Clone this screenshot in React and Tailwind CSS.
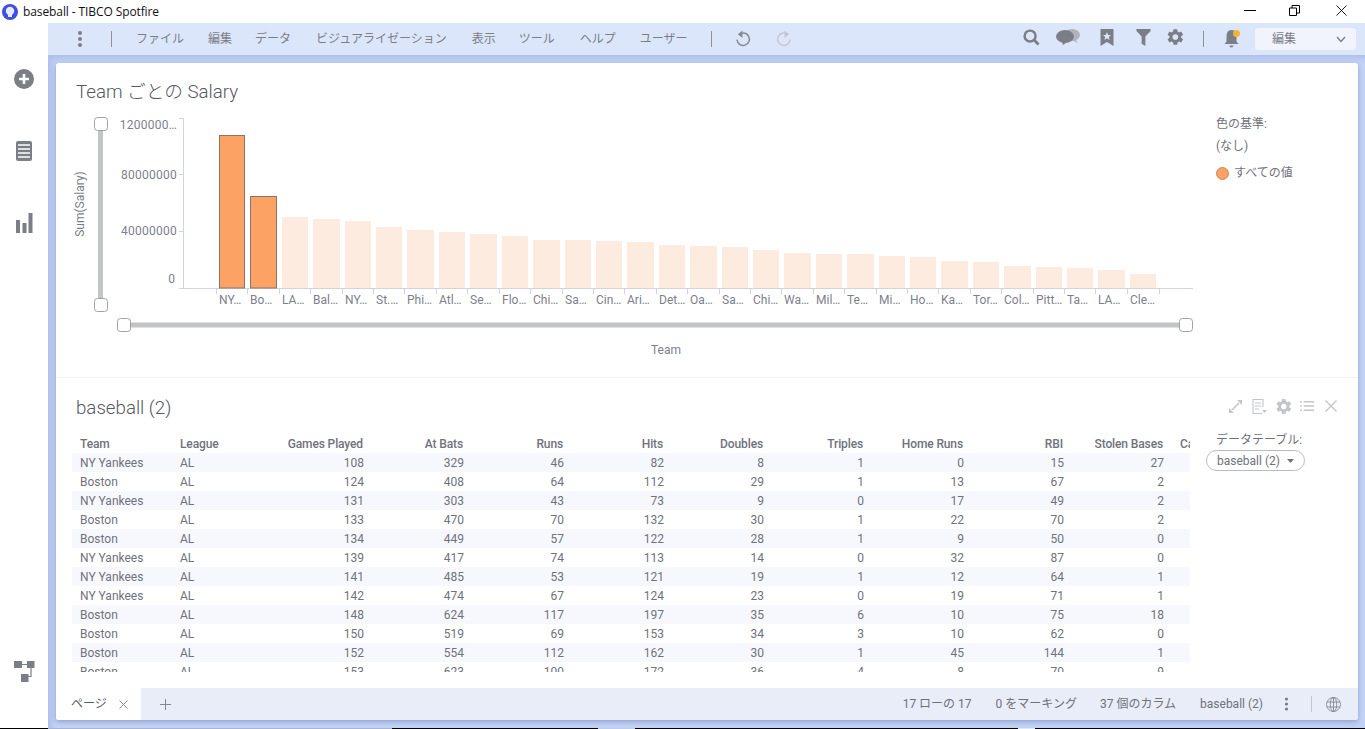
import React from "react";

const FONT = "font-['Roboto','Noto_Sans_CJK_JP',sans-serif]";
const G = "#7b7e87";

const Dots = ({ c = G }) => (
  <svg width="6" height="18" viewBox="0 0 6 18"><circle cx="3" cy="3" r="2" fill={c} /><circle cx="3" cy="9" r="2" fill={c} /><circle cx="3" cy="15" r="2" fill={c} /></svg>
);
const Sep = ({ cls = "" }) => <div className={`w-px h-[16px] bg-[#8d9099] ${cls}`} />;

const Gear = ({ size = 18, c = G }) => (
  <svg width={size} height={size} viewBox="0 0 24 24">
    <path fill={c} d="M19.4 13a7.6 7.6 0 0 0 0-2l2.3-1.8-2.2-3.8-2.7 1.1a7.5 7.5 0 0 0-1.8-1L14.6 2.6h-4.4l-.4 2.9a7.5 7.5 0 0 0-1.8 1L5.3 5.4 3.1 9.2 5.4 11a7.6 7.6 0 0 0 0 2l-2.3 1.8 2.2 3.8 2.7-1.1a7.5 7.5 0 0 0 1.8 1l.4 2.9h4.4l.4-2.9a7.5 7.5 0 0 0 1.8-1l2.7 1.1 2.2-3.8zM12.4 15.4a3.4 3.4 0 1 1 0-6.8 3.4 3.4 0 0 1 0 6.8z" />
  </svg>
);

const Undo = ({ c, flip }) => (
  <svg width="16" height="18" viewBox="0 0 16 18" style={flip ? { transform: "scaleX(-1)" } : undefined}>
    <path d="M4 4.6 A6.2 6.2 0 1 1 2 9.6" fill="none" stroke={c} strokeWidth="1.5" />
    <path d="M7.5 0.5 L7.5 8 L2.8 4.2 Z" fill={c} />
  </svg>
);

const menus = [
  ["ファイル", "ml-[24px]"], ["編集", "ml-[24px]"], ["データ", "ml-[23px]"], ["ビジュアライゼーション", "ml-[25px]"],
  ["表示", "ml-[25px]"], ["ツール", "ml-[23px]"], ["ヘルプ", "ml-[25px]"], ["ユーザー", "ml-[24px]"],
];

function Toolbar() {
  return (
    <div className="h-[32px] shrink-0 bg-[#dce6fb] flex items-center text-[12px] text-[#7b7e87]">
      <div className="ml-[29px]"><Dots /></div>
      <Sep cls="ml-[28px]" />
      {menus.map(([m, c]) => <span key={m} className={`${c} leading-[16px]`}>{m}</span>)}
      <Sep cls="ml-[23px]" />
      <div className="ml-[23px] flex"><Undo c="#868a93" /></div>
      <div className="ml-[25px] flex"><Undo c="#c3c8d2" flip /></div>
      <div className="ml-auto flex items-center">
        <div className="flex items-center mb-[4px]">
          <svg width="17" height="17" viewBox="0 0 18 18"><circle cx="7.5" cy="7.5" r="5.8" fill="none" stroke={G} strokeWidth="2.6" /><path d="M11.5 11.5 L16.5 16.5" stroke={G} strokeWidth="3" /></svg>
          <svg className="ml-[16px]" width="24" height="16" viewBox="0 0 24 16"><ellipse cx="16" cy="6" rx="8" ry="6" fill="#b0b3ba" /><path d="M20 11 L22 14 L16 11 Z" fill="#b0b3ba" /><ellipse cx="9" cy="7.5" rx="9" ry="6.5" fill={G} /><path d="M6 13 L7 16 L11 13 Z" fill={G} /></svg>
          <svg className="ml-[20px]" width="14" height="17" viewBox="0 0 14 17"><path d="M0.5 0 H13.5 V17 L7 13 L0.5 17 Z" fill={G} /><path d="M7 3.2 L8.2 6 L11 6.2 L8.8 8 L9.6 11 L7 9.3 L4.4 11 L5.2 8 L3 6.2 L5.8 6 Z" fill="#dce6fb" /></svg>
          <svg className="ml-[22px]" width="15" height="17" viewBox="0 0 15 18"><path d="M0 0 H15 V2 L9.5 8 V18 L5.5 15.5 V8 L0 2 Z" fill={G} /></svg>
          <div className="ml-[14px] flex"><Gear size={20} /></div>
        </div>
        <Sep cls="ml-[18px]" />
        <div className="relative ml-[20px] w-[18px] h-[20px]">
          <svg width="15" height="20" viewBox="0 0 15 20"><path d="M7.5 1 C3.5 1 2.5 4.5 2.5 8 V12.5 L0.5 15 H14.5 L12.5 12.5 V8 C12.5 4.5 11.5 1 7.5 1 Z" fill={G} /><path d="M5.5 16.5 H9.5 C9.5 19 5.5 19 5.5 16.5 Z" fill={G} /></svg>
          <div className="absolute left-[9px] top-[1px] w-[7px] h-[7px] rounded-full bg-[#f8b133]" />
        </div>
        <div className="ml-[13px] mr-[9px] w-[101px] h-[22px] rounded-[3px] bg-[#f1f4fd] flex items-center pl-[17px] pr-[10px] justify-between">
          <span className="text-[12px] text-[#7b7e87]">編集</span>
          <svg width="10" height="7" viewBox="0 0 10 7"><path d="M1 1 L5 5.5 L9 1" fill="none" stroke="#7b7e87" strokeWidth="1.3" /></svg>
        </div>
      </div>
    </div>
  );
}

const tops = [135,196,217,219,221,227,230,232,234,236,240,240,241,242,245,246,247,250,253,254,254,256,257,261,262,266,267,268,270,274];
const labels = ["NY…","Bo…","LA…","Bal…","NY…","St.…","Phi…","Atl…","Se…","Flo…","Chi…","Sa…","Cin…","Ari…","Det…","Oa…","Sa…","Chi…","Wa…","Mil…","Te…","Mi…","Ho…","Ka…","Tor…","Col…","Pitt…","Ta…","LA…","Cle…"];

function Handle({ x, y }) {
  return <rect x={x - 6.5} y={y - 6.5} width="13" height="13" rx="3" fill="#fff" stroke="#a0a2a9" strokeWidth="1" />;
}

function Chart() {
  const tc = "#7d7f8c";
  const ts = { fontFamily: "Roboto, 'Noto Sans CJK JP', sans-serif", fontSize: 12, fill: tc };
  const ns = { ...ts, letterSpacing: 0.25 };
  return (
    <svg width="1140" height="255" viewBox="60 105 1140 255" className="ml-[4px] block">
      <line x1="100.5" y1="124" x2="100.5" y2="305" stroke="#c3c4c9" strokeWidth="5" />
      <Handle x={101} y={124} />
      <Handle x={101} y={305} />
      <line x1="124" y1="325" x2="1186" y2="325" stroke="#c3c4c9" strokeWidth="5" />
      <Handle x={124} y={325} />
      <Handle x={1186} y={325} />
      <path d="M179 118.5 H183.5 V288.5 M179 174.5 H183 M179 231.5 H183 M179 288.5 H1193" fill="none" stroke="#d2d3de" />
      {tops.map((t, i) => {
        const x = Math.round(219 + i * 31.41);
        const nx = Math.round(219 + (i + 1) * 31.41);
        const w = nx - x - 5;
        const hi = i < 2;
        return (
          <g key={i}>
            <line x1={x - 2.5} x2={x - 2.5} y1="288" y2="294" stroke="#d2d3de" />
            <rect x={hi ? x + 0.5 : x} y={hi ? t + 0.5 : t} width={hi ? w - 1 : w} height={hi ? 288 - t - 0.5 : 288 - t} fill={hi ? "#fba264" : "#feebe0"} stroke={hi ? "#8a7466" : "none"} />
            <text x={x} y="304" style={ts}>{labels[i]}</text>
          </g>
        );
      })}
      <line x1="1159.5" x2="1159.5" y1="288" y2="294" stroke="#d2d3de" />
      <text x="177" y="129" textAnchor="end" style={ns}>1200000…</text>
      <text x="177" y="179" textAnchor="end" style={ns}>80000000</text>
      <text x="177" y="235" textAnchor="end" style={ns}>40000000</text>
      <text x="175" y="283" textAnchor="end" style={ts}>0</text>
      <text transform="translate(84 204) rotate(-90)" textAnchor="middle" style={ts}>Sum(Salary)</text>
      <text x="666" y="354" textAnchor="middle" style={ts}>Team</text>
    </svg>
  );
}

const cols = ["Team","League","Games Played","At Bats","Runs","Hits","Doubles","Triples","Home Runs","RBI","Stolen Bases","Ca"];
const rows = [
  ["NY Yankees","AL",108,329,46,82,8,1,0,15,27],
  ["Boston","AL",124,408,64,112,29,1,13,67,2],
  ["NY Yankees","AL",131,303,43,73,9,0,17,49,2],
  ["Boston","AL",133,470,70,132,30,1,22,70,2],
  ["Boston","AL",134,449,57,122,28,1,9,50,0],
  ["NY Yankees","AL",139,417,74,113,14,0,32,87,0],
  ["NY Yankees","AL",141,485,53,121,19,1,12,64,1],
  ["NY Yankees","AL",142,474,67,124,23,0,19,71,1],
  ["Boston","AL",148,624,117,197,35,6,10,75,18],
  ["Boston","AL",150,519,69,153,34,3,10,62,0],
  ["Boston","AL",152,554,112,162,30,1,45,144,1],
  ["Boston","AL",153,623,100,172,36,4,8,70,9],
];

function Table() {
  return (
    <div className="ml-[16px] w-[1118px] h-[238px] overflow-hidden text-[12px] text-[#6f727c]">
      <div className="flex h-[19px] items-center">
        {cols.map((c, i) => (
          <div key={c} className={`w-[100px] shrink-0 px-[8px] font-medium tracking-[-0.12px] whitespace-nowrap ${i < 2 || i === 11 ? "text-left" : "text-right pr-[9px]"}`}>{c}</div>
        ))}
      </div>
      {rows.map((r, k) => (
        <div key={k} className={`flex h-[19px] items-center ${k % 2 === 0 ? "bg-[#f7f8fd]" : "bg-white"}`}>
          {r.map((v, i) => (
            <div key={i} className={`w-[100px] shrink-0 px-[8px] whitespace-nowrap ${i < 2 ? "text-left" : "text-right"}`}>{v}</div>
          ))}
        </div>
      ))}
    </div>
  );
}

export default function App() {
  return (
    <div className={`w-[1365px] h-[729px] overflow-hidden bg-white flex flex-col ${FONT}`}>
      <div className="h-[23px] shrink-0 flex items-center bg-white">
        <svg className="ml-[2px]" width="16" height="16" viewBox="0 0 16 16">
          <circle cx="8" cy="8" r="8" fill="#3f4fe0" />
          <circle cx="8" cy="7" r="4.2" fill="#e6ebff" />
          <rect x="6" y="10.5" width="4" height="2.5" fill="#e6ebff" />
        </svg>
        <span className="ml-[5px] text-[12px] text-[#111] font-['Open_Sans',sans-serif] tracking-[-0.1px]">baseball - TIBCO Spotfire</span>
        <div className="ml-auto flex items-center mb-[2px]">
          <div className="w-[12px] h-px bg-black mr-[33px]" />
          <svg className="mr-[36px]" width="11" height="11" viewBox="0 0 11 11"><path d="M0.5 3 H7.5 V10.5 H0.5 Z M3 3 V0.5 H10.5 V8 H7.5" fill="none" stroke="#000" /></svg>
          <svg className="mr-[18px]" width="11" height="11" viewBox="0 0 11 11"><path d="M0.5 0.5 L10.5 10.5 M10.5 0.5 L0.5 10.5" stroke="#000" strokeWidth="0.9" /></svg>
        </div>
      </div>

      <div className="flex flex-1 min-h-0">
        <div className="w-[48px] shrink-0 flex flex-col items-center pt-[46px] pb-[46px]">
          <svg width="20" height="20" viewBox="0 0 20 20"><circle cx="10" cy="10" r="10" fill={G} /><path d="M10 5 V15 M5 10 H15" stroke="#fff" strokeWidth="2.6" /></svg>
          <svg className="mt-[52px]" width="16" height="20" viewBox="0 0 16 20"><rect width="16" height="20" rx="2" fill={G} /><path d="M2 4 H14 M2 8 H14 M2 12 H14 M2 16 H14" stroke="#fff" strokeWidth="1.6" /></svg>
          <svg className="mt-[52px]" width="17" height="20" viewBox="0 0 17 20"><rect y="7" width="4" height="13" fill={G} /><rect x="6.5" y="10" width="4" height="10" fill={G} /><rect x="12.5" width="4" height="20" fill={G} /></svg>
          <svg className="mt-auto" width="21" height="21" viewBox="0 0 21 21"><rect width="8" height="7" fill={G} /><rect x="13" width="7.5" height="7" fill={G} /><rect x="7" y="13" width="7.5" height="8" fill={G} /><path d="M8 3.5 H13 M17 7 V15.5 H14" fill="none" stroke={G} strokeWidth="1.2" /></svg>
        </div>

        <div className="flex-1 min-w-0 flex flex-col bg-[#c3d3f7]">
          <Toolbar />
          <div className="flex-1 min-h-0 pt-[8px] pl-[8px] pr-[7px] shadow-[inset_4px_4px_5px_rgba(80,100,160,0.16)]">
            <div className="h-[657px] bg-white rounded-[3px] overflow-hidden flex flex-col shadow-[0_2px_5px_rgba(70,90,150,0.4)]">
              <div className="h-[315px] shrink-0 border-b border-[#f1f2f6] flex">
                <div className="w-[1144px] shrink-0">
                  <div className="pt-[15px] pl-[20px] h-[42px] text-[18.7px] leading-[28px] font-light text-[#555862]">Team ごとの Salary</div>
                  <Chart />
                </div>
                <div className="ml-[16px] pt-[53px] text-[12px] text-[#6f727c]">
                  <div className="leading-[16px]">色の基準:</div>
                  <div className="leading-[16px] mt-[6px]">(なし)</div>
                  <div className="flex items-center mt-[11px] leading-[16px]">
                    <div className="w-[13px] h-[13px] rounded-full bg-[#fba264] border border-[#c98a5c]" />
                    <span className="ml-[5px]">すべての値</span>
                  </div>
                </div>
              </div>

              <div className="flex-1 min-h-0 flex">
                <div className="w-[1134px] shrink-0">
                  <div className="h-[56px] pt-[16px] pl-[20px] text-[18.7px] leading-[28px] font-light text-[#555862]">baseball (2)</div>
                  <Table />
                </div>
                <div className="flex-1 relative">
                  <div className="flex items-center justify-end h-[16px] mt-[20px] mr-[21px]">
                    <svg width="13" height="13" viewBox="0 0 13 13"><path d="M8 0 H13 V5 Z M0 8 L5 13 H0 Z" fill="#c3c5ca" /><path d="M10 3 L3 10" stroke="#c3c5ca" strokeWidth="1.6" /></svg>
                    <svg className="ml-[10px]" width="15" height="15" viewBox="0 0 15 15"><path d="M10 14.5 H1 V0.5 H11 V8 M3 4 H9 M3 7 H9 M3 10 H7" fill="none" stroke="#c3c5ca" strokeWidth="1.1" /><path d="M10 11 H15 L12.5 14 Z" fill="#c3c5ca" /></svg>
                    <div className="ml-[7px] flex"><Gear size={19} c="#c3c5ca" /></div>
                    <svg className="ml-[7px]" width="14" height="12" viewBox="0 0 15 12"><path d="M4 1.5 H15 M4 6 H15 M4 10.5 H15 M0 1.5 H2 M0 6 H2 M0 10.5 H2" stroke="#c3c5ca" strokeWidth="1.5" /></svg>
                    <svg className="ml-[11px]" width="12" height="12" viewBox="0 0 12 12"><path d="M0.5 0.5 L11.5 11.5 M11.5 0.5 L0.5 11.5" stroke="#c3c5ca" strokeWidth="1.4" /></svg>
                  </div>
                  <div className="ml-[26px] mt-[18px] text-[12px] leading-[16px] text-[#6f727c]">データテーブル:</div>
                  <div className="ml-[16px] mt-[2px] w-[99px] h-[21px] rounded-full border border-[#b9bbc1] flex items-center pl-[10px] text-[12px] text-[#6f727c]">
                    baseball (2)
                    <svg className="ml-[7px]" width="7" height="4" viewBox="0 0 7 4"><path d="M0 0 H7 L3.5 4 Z" fill="#6f727c" /></svg>
                  </div>
                </div>
              </div>

              <div className="h-[32px] shrink-0 bg-[#e9edf7] flex items-center text-[12px] text-[#6f727c]">
                <div className="w-[85px] h-full bg-white flex items-center pl-[15px]">
                  <span className="text-[#55585f]">ページ</span>
                  <svg className="ml-[12px]" width="9" height="9" viewBox="0 0 9 9"><path d="M0.5 0.5 L8.5 8.5 M8.5 0.5 L0.5 8.5" stroke="#85888f" /></svg>
                </div>
                <svg className="ml-[19px]" width="11" height="11" viewBox="0 0 11 11"><path d="M5.5 0 V11 M0 5.5 H11" stroke="#85888f" /></svg>
                <div className="ml-auto flex items-center">
                  <span>17 ローの 17</span>
                  <span className="ml-[24px]">0 をマーキング</span>
                  <span className="ml-[23px]">37 個のカラム</span>
                  <span className="ml-[24px]">baseball (2)</span>
                  <div className="ml-[21px] flex"><svg width="5" height="14" viewBox="0 0 5 14"><circle cx="2.5" cy="2" r="1.6" fill={G} /><circle cx="2.5" cy="7" r="1.6" fill={G} /><circle cx="2.5" cy="12" r="1.6" fill={G} /></svg></div>
                  <div className="ml-[22px] w-px h-[16px] bg-[#c3c6d0]" />
                  <svg className="ml-[14px] mr-[17px]" width="15" height="15" viewBox="0 0 15 15"><g fill="none" stroke="#85888f" strokeWidth="0.9"><circle cx="7.5" cy="7.5" r="7" /><ellipse cx="7.5" cy="7.5" rx="3.2" ry="7" /><path d="M7.5 0.5 V14.5 M1 5 H14 M1 10 H14" /></g></svg>
                </div>
              </div>
            </div>
          </div>
        </div>
      </div>
      <div className="h-px shrink-0 flex">
        <div className="w-[48px] bg-black" />
        <div className="w-[344px] bg-[#a9b4d2]" />
        <div className="w-[206px] bg-black" />
        <div className="w-[37px] bg-[#bccbef]" />
        <div className="w-[383px] bg-black" />
        <div className="w-[17px] bg-[#dfe8fb]" />
        <div className="flex-1 bg-black" />
      </div>
    </div>
  );
}
